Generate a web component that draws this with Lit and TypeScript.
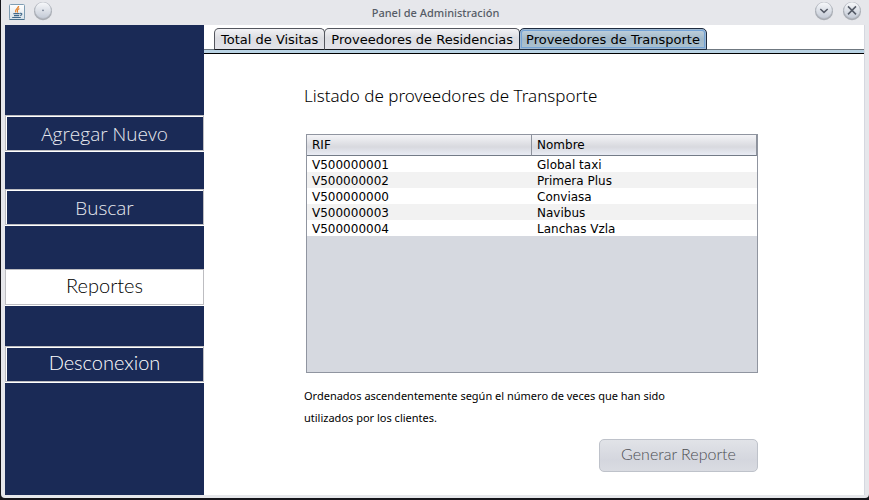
import { LitElement, html, css, svg } from "lit";
import { customElement, state } from "lit/decorators.js";
import { classMap } from "lit/directives/class-map.js";

const TABS = ["Total de Visitas", "Proveedores de Residencias", "Proveedores de Transporte"];

const MENU = [
  { label: "Agregar Nuevo", face: "light" },
  { label: "Buscar", face: "light" },
  { label: "Reportes", face: "round" },
  { label: "Desconexion", face: "round" },
];

const PROVIDERS = [
  ["V500000001", "Global taxi"],
  ["V500000002", "Primera Plus"],
  ["V500000000", "Conviasa"],
  ["V500000003", "Navibus"],
  ["V500000004", "Lanchas Vzla"],
];

const orb = (glyph: unknown) => html`
  <svg width="20" height="20" viewBox="0 0 20 20" aria-hidden="true">
    <defs>
      <linearGradient id="face" x1="0" y1="0" x2="0" y2="1">
        <stop offset="0" stop-color="#f8f9fb" />
        <stop offset="1" stop-color="#c3cad6" />
      </linearGradient>
    </defs>
    <circle cx="10" cy="9.2" r="9" fill="#7f858e" opacity="0.6" />
    <circle cx="10" cy="8.2" r="8.2" fill="url(#face)" stroke="#b4b9c1" stroke-width="0.6" />
    ${glyph}
  </svg>
`;

const chevron = svg`<path d="M6.3 7 L10 10.4 L13.7 7" fill="none" stroke="#545a66" stroke-width="1.5" />`;
const cross = svg`<path d="M6 4.4 L14 12.4 M14 4.4 L6 12.4" fill="none" stroke="#545a66" stroke-width="1.5" />`;
const dot = svg`<circle cx="10" cy="8.4" r="0.8" fill="#6b7789" />`;

const javaLogo = html`
  <svg width="16" height="16" viewBox="0 0 16 16" aria-hidden="true">
    <defs>
      <linearGradient id="tile" x1="0" y1="0" x2="0" y2="1">
        <stop offset="0" stop-color="#ffffff" />
        <stop offset="1" stop-color="#d5e0e8" />
      </linearGradient>
    </defs>
    <rect x="0.5" y="0.5" width="15" height="15" rx="1" fill="url(#tile)" stroke="#7e9db3" />
    <path d="M0.5 15.5 H15.5" stroke="#47708d" />
    <path d="M9.6 2 C9.8 4.4 5.4 4.8 6.6 8.4 M10.4 4.6 C7.8 5.4 8.2 6.6 8.6 8.6" fill="none" stroke="#e5832c" stroke-width="1.3" />
    <path d="M4.4 9.6 H10.6 M5 11.6 H10.2 M3.2 13.5 H11.8 M11 9.4 C13.6 8.8 13.4 11 11.2 11.6" fill="none" stroke="#41698a" stroke-width="1.1" />
  </svg>
`;

@customElement("app-root")
export class AppRoot extends LitElement {
  @state() private tab = 2;
  @state() private section = 2;

  static styles = css`
    :host {
      display: block;
      box-sizing: border-box;
      min-height: 100vh;
      padding: 0 0 2px 1px;
      background: #15151b;
      color: #000;
      font-family: "DejaVu Sans", sans-serif;
    }
    * {
      box-sizing: border-box;
    }
    button {
      margin: 0;
      font: inherit;
      color: inherit;
    }
    .window {
      display: flex;
      flex-direction: column;
      min-height: calc(100vh - 2px);
      border-radius: 0 0 4px 4px;
      background: #e6e7eb;
      padding: 0 5px 3px 4px;
    }
    .titlebar {
      display: grid;
      grid-template-columns: 1fr auto 1fr;
      align-items: center;
      height: 25px;
      padding: 0 2px 4px 4px;
    }
    .titlebar svg {
      display: block;
    }
    .left,
    .right {
      display: flex;
      align-items: center;
      gap: 8px;
    }
    .right {
      justify-content: flex-end;
    }
    .orb {
      padding: 0;
      border: 0;
      background: none;
    }
    .title {
      margin: 0;
      padding-top: 3px;
      font: 500 11px/20px "Noto Sans", sans-serif;
      color: #565c66;
    }
    .body {
      flex: 1;
      display: grid;
      grid-template-columns: 199px 1fr;
      box-shadow: 1px 0 #d5d8e0;
    }
    .sidebar {
      display: grid;
      grid-template-rows: 90px 37px 37px 37px 43px 37px 40px 37px 1fr;
      background: #1a2a56;
    }
    .item {
      border: 1px solid #bdbdc1;
      box-shadow: inset 1px 1px #fff, 0 1px #fff;
      height: 36px;
      background: transparent;
      color: #fff;
    }
    .item:nth-child(1) {
      grid-row: 2;
    }
    .item:nth-child(2) {
      grid-row: 4;
    }
    .item:nth-child(3) {
      grid-row: 6;
    }
    .item:nth-child(4) {
      grid-row: 8;
    }
    .light {
      padding: 2px 0 0;
      font: 300 19px/24px "Open Sans", sans-serif;
      color: #e6e8ee;
    }
    .round {
      padding: 0 0 4px;
      font: 300 20px/24px "Lato", sans-serif;
    }
    .item.current {
      background: #fff;
      color: #000;
    }
    .content {
      background: #fff;
      min-width: 0;
    }
    .tabs {
      display: flex;
      align-items: flex-end;
      height: 29px;
      background: linear-gradient(#6f7880, #6f7880) 0 24px / 100% 1px no-repeat,
        linear-gradient(#b9d3e4, #b9d3e4) 0 25px / 100% 3px no-repeat,
        linear-gradient(#000, #000) 0 28px / 100% 1px no-repeat;
      padding: 0 0 4px 10px;
    }
    .tab {
      height: 22px;
      margin-right: -1px;
      padding: 2px 6px 0;
      border: 1px solid #54565e;
      border-bottom-color: #15171c;
      border-radius: 5px 5px 0 0;
      background: linear-gradient(#f3f3f6, #dcdde2 45%, #e3e3e9);
      font-size: 13px;
      line-height: 18px;
      white-space: nowrap;
    }
    .tab.active {
      border-color: #1f2c40;
      background: linear-gradient(#c3d3de, #a1b8c9 50%, #adc3d1);
      box-shadow: inset 0 0 0 1px #9fb9d2, inset 0 0 0 2px #74a3d6;
    }
    .panel {
      display: flex;
      flex-direction: column;
      padding: 30px 106px 22px 100px;
    }
    .heading {
      margin: 0 0 26px;
      font: 300 17px/24px "Noto Sans", sans-serif;
    }
    .grid {
      min-height: 239px;
      margin: 0 0 12px 2px;
      border: 1px solid #9095a0;
      background: #d6d9e0;
    }
    table {
      width: 100%;
      border-collapse: separate;
      border-spacing: 0;
      table-layout: fixed;
      font-size: 12px;
      line-height: 14px;
    }
    th {
      height: 21px;
      padding: 0 5px;
      border-right: 1px solid #8d929c;
      border-bottom: 1px solid #737b87;
      background: linear-gradient(#f4f4f7, #dcdde2 50%, #d8d9df 60%, #e9ecf4);
      font-weight: 400;
      text-align: left;
    }
    td {
      height: 16px;
      padding: 2px 5px 0;
      background: #fff;
    }
    tr:nth-child(even) td {
      background: #f2f2f2;
    }
    .note {
      max-width: 390px;
      margin: 0 0 10px;
      font: 400 11px/22px "Noto Sans", sans-serif;
    }
    .report {
      align-self: flex-end;
      width: 159px;
      height: 33px;
      padding: 0 0 4px;
      border: 1px solid #bec2ca;
      border-radius: 5px;
      background: linear-gradient(#e1e3e8, #d4d6de 65%, #dadce2);
      color: #4c4e53;
      font: 300 16px/24px "Lato", sans-serif;
    }
  `;

  render() {
    return html`
      <div class="window">
        <header class="titlebar">
          <div class="left">
            ${javaLogo}
            <button class="orb" aria-label="Menú">${orb(dot)}</button>
          </div>
          <h1 class="title">Panel de Administración</h1>
          <div class="right">
            <button class="orb" aria-label="Minimizar">${orb(chevron)}</button>
            <button class="orb" aria-label="Cerrar">${orb(cross)}</button>
          </div>
        </header>
        <div class="body">
          <nav class="sidebar">
            ${MENU.map(
              (m, i) => html`<button
                class=${classMap({ item: true, [m.face]: true, current: i === this.section })}
                @click=${() => (this.section = i)}
              >${m.label}</button>`
            )}
          </nav>
          <main class="content">
            <div class="tabs" role="tablist">
              ${TABS.map(
                (t, i) => html`<button
                  role="tab"
                  aria-selected=${i === this.tab}
                  class=${classMap({ tab: true, active: i === this.tab })}
                  @click=${() => (this.tab = i)}
                >${t}</button>`
              )}
            </div>
            <section class="panel">
              <h2 class="heading">Listado de proveedores de Transporte</h2>
              <div class="grid">
                <table>
                  <thead>
                    <tr><th scope="col">RIF</th><th scope="col">Nombre</th></tr>
                  </thead>
                  <tbody>
                    ${PROVIDERS.map(([rif, name]) => html`<tr><td>${rif}</td><td>${name}</td></tr>`)}
                  </tbody>
                </table>
              </div>
              <p class="note">
                Ordenados ascendentemente según el número de veces que han sido utilizados por los clientes.
              </p>
              <button class="report" disabled>Generar Reporte</button>
            </section>
          </main>
        </div>
      </div>
    `;
  }
}
